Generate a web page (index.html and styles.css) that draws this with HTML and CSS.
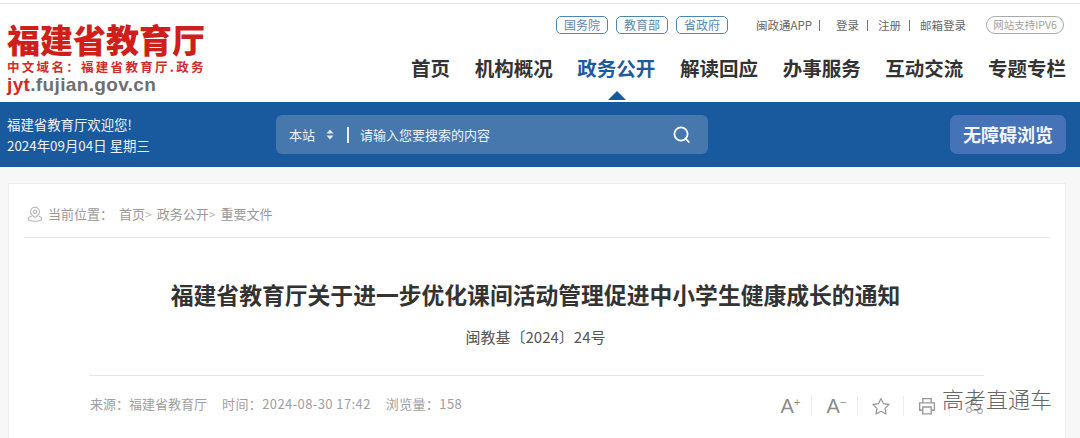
FILE: index.html
```html
<!DOCTYPE html>
<html lang="zh-CN">
<head>
<meta charset="utf-8">
<title>福建省教育厅</title>
<link rel="stylesheet" href="styles.css">
</head>
<body>
<div class="topline"></div>
<header class="header">
  <div class="logo">
    <div class="logo-name">福建省教育厅</div>
    <div class="logo-cn">中文域名：福建省教育厅.政务</div>
    <div class="logo-url"><span class="logo-red">jyt</span>.fujian.gov.cn</div>
  </div>
  <div class="header-right">
    <div class="toplinks">
      <a class="pill">国务院</a>
      <a class="pill">教育部</a>
      <a class="pill">省政府</a>
      <div class="userlinks">
        <span>闽政通APP</span><i class="sep sep-first"></i>
        <span>登录</span><i class="sep"></i>
        <span>注册</span><i class="sep"></i>
        <span>邮箱登录</span>
      </div>
      <span class="ipv6">网站支持IPV6</span>
    </div>
    <nav class="nav">
      <a>首页</a>
      <a>机构概况</a>
      <a class="active">政务公开</a>
      <a>解读回应</a>
      <a>办事服务</a>
      <a>互动交流</a>
      <a>专题专栏</a>
    </nav>
  </div>
</header>
<section class="band">
  <div class="welcome">
    <div>福建省教育厅欢迎您!</div>
    <div>2024年09月04日 星期三</div>
  </div>
  <div class="search">
    <span class="scope">本站</span>
    <svg class="updown" width="8" height="11" viewBox="0 0 8 11"><path d="M4 0.500 7.500 4.500H.5zM4 10.500 .5 6.500H7.500z" fill="#dfe8f3"/></svg>
    <i class="bar"></i>
    <span class="placeholder">请输入您要搜索的内容</span>
    <svg class="magnifier" width="19" height="19" viewBox="0 0 19 19" fill="none" stroke="#fff" stroke-width="1.800"><circle cx="9" cy="9" r="6.600"/><path d="M13.800 13.800 16.800 17" stroke-linecap="round"/></svg>
  </div>
  <a class="barrier">无障碍浏览</a>
</section>
<main class="page">
  <article class="card">
    <div class="crumbs">
      <svg class="pin" width="16" height="16" viewBox="0 0 16 16" fill="none" stroke="#b5b5b5" stroke-width="1.100"><path d="M8 1.200a4.500 4.500 0 0 0-4.500 4.500C3.500 8.600 8 11.400 8 11.400s4.500-2.800 4.500-5.700A4.500 4.500 0 0 0 8 1.200z"/><circle cx="8" cy="5.700" r="1.700"/><path d="M4.500 10C2.500 10.700 1.300 11.700 1.300 12.800 1.300 14.200 4.300 15.200 8 15.200S14.700 14.200 14.700 12.800C14.700 11.700 13.500 10.700 11.500 10"/></svg>
      <span class="crumb-label">当前位置：</span>
      <span>首页</span><span class="gt">&gt;</span>
      <span>政务公开</span><span class="gt">&gt;</span>
      <span>重要文件</span>
    </div>
    <h1 class="title">福建省教育厅关于进一步优化课间活动管理促进中小学生健康成长的通知</h1>
    <p class="docno">闽教基〔2024〕24号</p>
    <div class="meta">
      <div class="meta-text">
        <span>来源：福建省教育厅</span>
        <span class="spaced">时间：2024-08-30 17:42</span>
        <span class="spaced">浏览量：158</span>
      </div>
      <div class="tools">
        <span class="tool tool-font">A<sup>+</sup></span>
        <span class="tool tool-font">A<sup>−</sup></span>
        <span class="tool"><svg width="20" height="19" viewBox="0 0 20 19" fill="none" stroke="#999" stroke-width="1.300"><path d="M10 1.500 12.500 6.700 18 7.500 14 11.400 15 17 10 14.300 5 17 6 11.400 2 7.500 7.500 6.700z" stroke-linejoin="round"/></svg></span>
        <span class="tool"><svg width="20" height="20" viewBox="0 0 19 19" fill="none" stroke="#999" stroke-width="1.300"><path d="M5.500 6V2.500h8V6M5.500 13.500H2.500V6.500h14v7H13.500"/><path d="M5.500 10.500h8v6.500h-8z"/></svg></span>
        <span class="tool tool-last"><svg width="20" height="18" viewBox="0 0 20 18" fill="none" stroke="#aaa" stroke-width="1.100"><circle cx="5" cy="13" r="2.400"/><circle cx="16" cy="14" r="2.400"/><circle cx="10" cy="4" r="2.400"/><path d="M9 6 6 11M11 6 15 12M7.500 13.300H13.500"/></svg></span>
      </div>
    </div>
  </article>
</main>
<div class="watermark">高考直通车</div>
</body>
</html>
```
FILE: styles.css
```css
* { box-sizing: border-box; }
html, body { margin: 0; padding: 0; }
body {
  position: relative;
  width: 1080px;
  height: 438px;
  overflow: hidden;
  background: #f7f7f7;
  font-family: "Noto Sans CJK SC", "Noto Sans", sans-serif;
  color: #333;
}
.topline {
  height: 4px;
  background: #fff;
  border-bottom: 1px solid #e6e6e6;
}
.header {
  height: 98px;
  background: #fff;
  display: flex;
  justify-content: space-between;
}
.logo { padding: 16px 0 0 7px; width: 260px; }
.logo-name {
  font-size: 33px;
  line-height: 38px;
  font-weight: 900;
  color: #cf1f1a;
  white-space: nowrap;
}
.logo-cn {
  font-size: 12.500px;
  line-height: 14px;
  margin-top: 2px;
  font-weight: 700;
  color: #d22c28;
  letter-spacing: 2.300px;
  white-space: nowrap;
}
.logo-url {
  font-family: "Liberation Sans", sans-serif;
  font-size: 19px;
  line-height: 20px;
  margin-top: 1px;
  font-weight: 700;
  color: #6d6f72;
  letter-spacing: 0.350px;
}
.logo-red { color: #cf2a26; }
.header-right { width: 669px; padding-right: 14px; }
.toplinks {
  display: flex;
  align-items: center;
  height: 18px;
  margin-top: 12px;
  padding-left: 145px;
  font-size: 11.500px;
  color: #666;
  white-space: nowrap;
}
.pill {
  flex: none;
  width: 52px;
  height: 18px;
  margin-right: 8px;
  border: 1px solid #4f84b6;
  border-radius: 5px;
  color: #5d87ae;
  text-align: center;
  line-height: 16px;
  font-size: 12px;
}
.userlinks { flex: none; display: flex; align-items: center; margin-left: 20px; color: #666; }
.sep { width: 1px; height: 11px; background: #777; margin: 0 10px 0 8px; }
.sep-first { margin: 0 16px 0 7px; }
.ipv6 {
  flex: none;
  width: 78px;
  height: 18px;
  margin-left: 20px;
  border: 1px solid #aaa;
  border-radius: 9px;
  color: #a0a0a0;
  font-size: 10.500px;
  line-height: 16px;
  text-align: center;
}
.nav {
  display: flex;
  justify-content: space-between;
  margin-top: 20px;
  font-size: 19.500px;
  line-height: 28px;
  font-weight: 700;
  color: #333;
}
.nav a { position: relative; white-space: nowrap; }
.nav .active { color: #1d5a9e; }
.nav .active::after {
  content: "";
  position: absolute;
  left: 31px;
  top: 37px;
  border-left: 9px solid transparent;
  border-right: 9px solid transparent;
  border-bottom: 9px solid #195a9f;
}
.band {
  height: 65px;
  background: #195a9f;
  display: flex;
  align-items: center;
  color: #eef3f9;
}
.welcome {
  width: 276px;
  padding-left: 7px;
  font-size: 13.400px;
  line-height: 21px;
}
.search {
  width: 432px;
  height: 39px;
  background: #4677ad;
  border-radius: 6px;
  display: flex;
  align-items: center;
  padding-left: 13px;
  font-size: 13px;
}
.updown { margin-left: 11px; }
.bar { width: 2px; height: 16px; background: #e6edf5; margin-left: 13px; }
.placeholder { margin-left: 11px; flex: 1; }
.magnifier { margin-right: 17px; }
.barrier {
  width: 116px;
  height: 39px;
  margin-left: 242px;
  background: #4672b8;
  border-radius: 7px;
  color: #f2f5fa;
  font-size: 18px;
  font-weight: 700;
  line-height: 39px;
  text-align: center;
}
.page { padding: 16px 14px 0 8px; }
.card {
  height: 255px;
  background: #fff;
  border: 1px solid #eeeeee;
  border-bottom: 0;
  padding: 0 15px;
}
.crumbs {
  height: 54px;
  display: flex;
  align-items: center;
  border-bottom: 1px solid #e6e6e6;
  padding: 6px 0 0 3px;
  font-size: 13px;
  color: #999;
  white-space: nowrap;
}
.pin { margin-right: 5px; }
.crumb-label { margin-right: 6px; }
.gt { color: #bbb; margin-right: 5px; font-size: 12px; }
.title {
  margin: 41px 0 0;
  font-size: 22.800px;
  line-height: 32px;
  font-weight: 700;
  text-align: center;
  color: #333;
  padding-right: 3px;
  white-space: nowrap;
}
.docno {
  margin: 16px 0 0;
  font-size: 15px;
  line-height: 20px;
  text-align: center;
  color: #555;
  padding-right: 3px;
}
.meta {
  margin: 28px 66px 0 65px;
  height: 42px;
  border-top: 1px solid #e6e6e6;
  display: flex;
  justify-content: space-between;
  padding: 19px 0 0 1px;
  font-size: 13px;
  line-height: 18px;
  color: #a0a0a0;
}
.meta-text { display: flex; gap: 15px; }
.spaced { letter-spacing: 0.400px; }
.tools { display: flex; align-items: center; height: 20px; margin-top: 1px; }
.tool {
  width: 46px;
  height: 20px;
  display: flex;
  align-items: center;
  justify-content: center;
  border-right: 1px solid #eee;
  color: #8c8c8c;
}
.tool-font {
  padding-left: 4px;
  font-family: "Liberation Sans", sans-serif;
  font-size: 20px;
}
.tool-font sup { font-size: 11px; line-height: 0; margin-top: -8px; }
.tool-last { width: 34px; border-right: 0; justify-content: flex-end; }
.watermark {
  position: absolute;
  left: 942px;
  top: 383px;
  color: #666;
  font-size: 22px;
  font-weight: 300;
  line-height: 30px;
  white-space: nowrap;
}
```
